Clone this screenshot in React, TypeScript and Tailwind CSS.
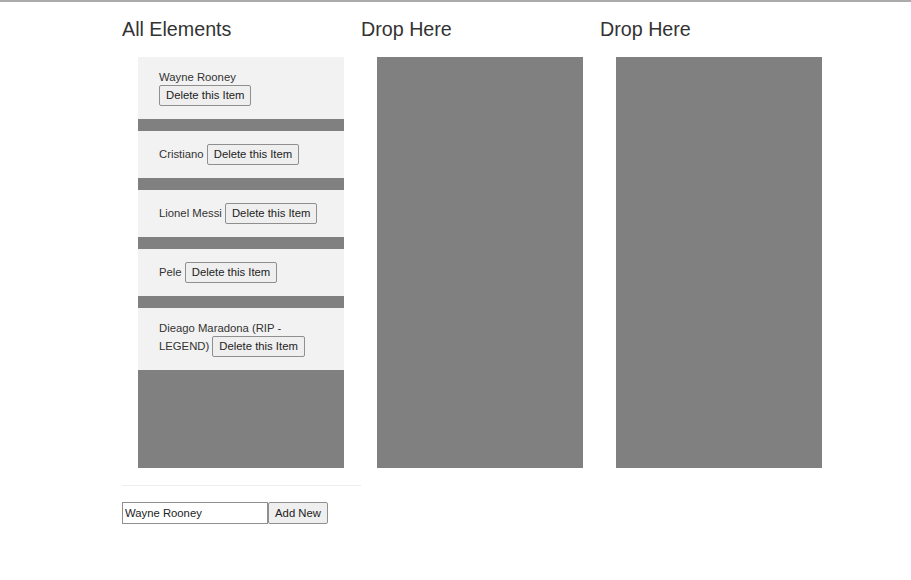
import React from 'react';

const players = [
  'Wayne Rooney',
  'Cristiano',
  'Lionel Messi',
  'Pele',
  'Dieago Maradona (RIP - LEGEND)',
];

const btn =
  'inline-block border border-[#8f8f8f] bg-[#efefef] rounded-[2px] px-[6px] h-[21px] text-[11.3px] leading-[19px] text-[#222] align-baseline';

const App: React.FC = () => {
  return (
    <div className="min-h-[580px] bg-white border-t-2 border-[#ababab] text-[#333] font-['Liberation_Sans',Arial,sans-serif]">
      <div className="flex pl-[122px]">
        {/* список */}
        <div className="w-[239px]">
          <h3 className="text-[19.7px] leading-[22px] mt-[16px] mb-[17px]">All Elements</h3>
          <div className="ml-[16px] w-[206px] h-[411px] bg-[#808080] flex flex-col gap-[12px]">
            {players.map((p) => (
              <div key={p} className="bg-[#f2f2f2] px-[21px] py-[13px] text-[11.3px] leading-[15px]">
                {p} <button className={btn}>Delete this Item</button>
              </div>
            ))}
          </div>
          <hr className="mt-[17px] border-t border-[#eeeeee]" />
          <div className="mt-[16px] flex">
            <input
              defaultValue="Wayne Rooney"
              className="w-[146px] h-[22px] border border-[#8f8f8f] px-[2px] text-[11.3px] text-[#222] outline-none"
            />
            <button className="border border-[#8f8f8f] bg-[#efefef] rounded-[2px] w-[60px] h-[22px] text-[11.3px] text-[#222]">
              Add New
            </button>
          </div>
        </div>

        {/* зоны */}
        {[0, 1].map((i) => (
          <div key={i} className="w-[239px]">
            <h3 className="text-[19.7px] leading-[22px] mt-[16px] mb-[17px]">Drop Here</h3>
            <div className="ml-[16px] w-[206px] h-[411px] bg-[#808080]" />
          </div>
        ))}
      </div>
    </div>
  );
};

export default App;
